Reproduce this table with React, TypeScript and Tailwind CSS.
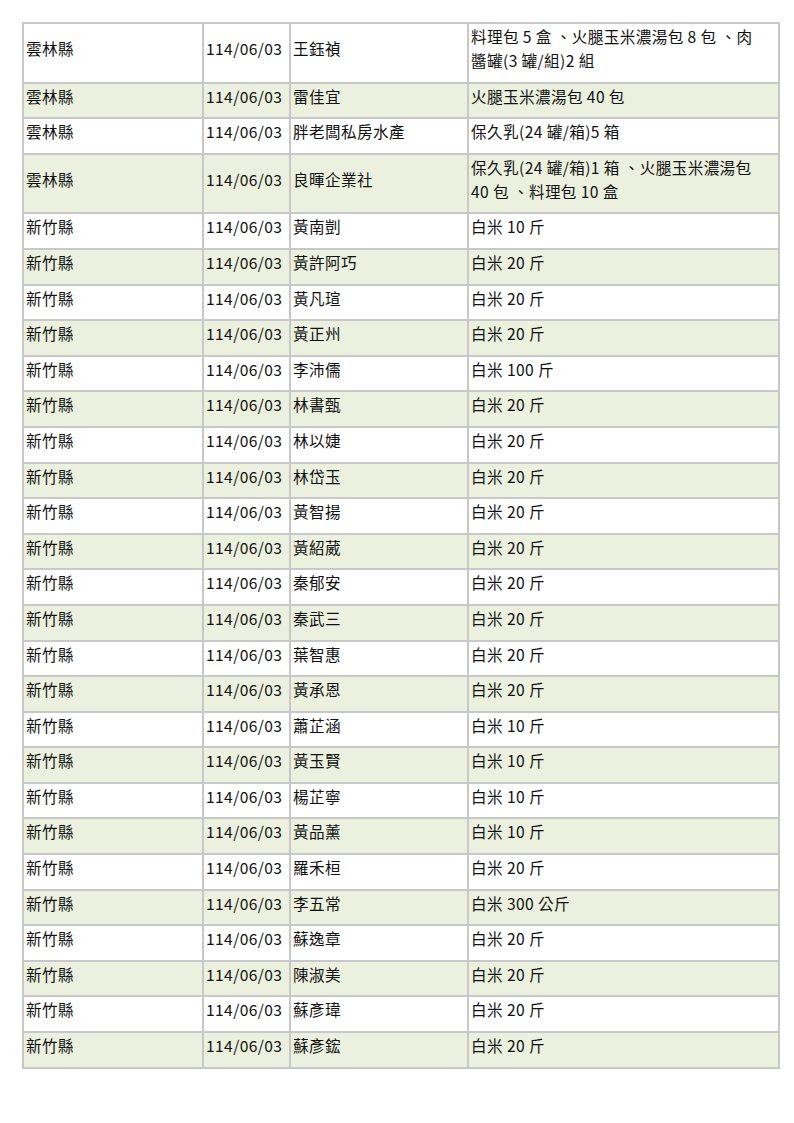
import { Fragment } from "react";

type Row = {
  county: string;
  date: string;
  name: string;
  items: string[];
};

const rice = (n: string, unit = "斤") => [`白米 ${n} ${unit}`];

const rows: Row[] = [
  {
    county: "雲林縣",
    date: "114/06/03",
    name: "王鈺禎",
    items: ["料理包 5 盒 、火腿玉米濃湯包 8 包 、肉", "醬罐(3 罐/組)2 組"],
  },
  { county: "雲林縣", date: "114/06/03", name: "雷佳宜", items: ["火腿玉米濃湯包 40 包"] },
  { county: "雲林縣", date: "114/06/03", name: "胖老闆私房水產", items: ["保久乳(24 罐/箱)5 箱"] },
  {
    county: "雲林縣",
    date: "114/06/03",
    name: "良暉企業社",
    items: ["保久乳(24 罐/箱)1 箱 、火腿玉米濃湯包", "40 包 、料理包 10 盒"],
  },
  { county: "新竹縣", date: "114/06/03", name: "黃南剴", items: rice("10") },
  { county: "新竹縣", date: "114/06/03", name: "黃許阿巧", items: rice("20") },
  { county: "新竹縣", date: "114/06/03", name: "黃凡瑄", items: rice("20") },
  { county: "新竹縣", date: "114/06/03", name: "黃正州", items: rice("20") },
  { county: "新竹縣", date: "114/06/03", name: "李沛儒", items: rice("100") },
  { county: "新竹縣", date: "114/06/03", name: "林書甄", items: rice("20") },
  { county: "新竹縣", date: "114/06/03", name: "林以婕", items: rice("20") },
  { county: "新竹縣", date: "114/06/03", name: "林岱玉", items: rice("20") },
  { county: "新竹縣", date: "114/06/03", name: "黃智揚", items: rice("20") },
  { county: "新竹縣", date: "114/06/03", name: "黃紹葳", items: rice("20") },
  { county: "新竹縣", date: "114/06/03", name: "秦郁安", items: rice("20") },
  { county: "新竹縣", date: "114/06/03", name: "秦武三", items: rice("20") },
  { county: "新竹縣", date: "114/06/03", name: "葉智惠", items: rice("20") },
  { county: "新竹縣", date: "114/06/03", name: "黃承恩", items: rice("20") },
  { county: "新竹縣", date: "114/06/03", name: "蕭芷涵", items: rice("10") },
  { county: "新竹縣", date: "114/06/03", name: "黃玉賢", items: rice("10") },
  { county: "新竹縣", date: "114/06/03", name: "楊芷寧", items: rice("10") },
  { county: "新竹縣", date: "114/06/03", name: "黃品薰", items: rice("10") },
  { county: "新竹縣", date: "114/06/03", name: "羅禾桓", items: rice("20") },
  { county: "新竹縣", date: "114/06/03", name: "李五常", items: rice("300", "公斤") },
  { county: "新竹縣", date: "114/06/03", name: "蘇逸章", items: rice("20") },
  { county: "新竹縣", date: "114/06/03", name: "陳淑美", items: rice("20") },
  { county: "新竹縣", date: "114/06/03", name: "蘇彥瑋", items: rice("20") },
  { county: "新竹縣", date: "114/06/03", name: "蘇彥鋐", items: rice("20") },
];

const cell =
  "border-r-2 border-b-2 border-[#c8c8c8] pl-[2px] pr-[2px] pt-0 pb-[9.6px] leading-[24px] whitespace-nowrap";

export default function App() {
  return (
    <div className="min-h-[1123px] w-[794px] bg-white pl-[22px] pt-[22px] font-['Noto_Sans_CJK_TC','Noto_Sans',sans-serif] text-[15.6px] tracking-[0.4px] text-[#111]">
      <table className="w-[758px] table-fixed border-separate border-spacing-0 border-t-2 border-l-2 border-[#c8c8c8]">
        <colgroup>
          <col className="w-[180px]" />
          <col className="w-[87px]" />
          <col className="w-[178px]" />
          <col className="w-[311px]" />
        </colgroup>
        <tbody>
          {rows.map((row, i) => (
            <tr key={i} className={i % 2 === 1 ? "bg-[#ebf1de]" : "bg-white"}>
              <td className={`${cell} align-middle`}>{row.county}</td>
              <td className={`${cell} align-middle`}>{row.date}</td>
              <td className={`${cell} align-middle`}>{row.name}</td>
              <td className={`${cell} align-top`}>
                {row.items.map((line, j) => (
                  <Fragment key={j}>
                    {j > 0 && <br />}
                    {line}
                  </Fragment>
                ))}
              </td>
            </tr>
          ))}
        </tbody>
      </table>
    </div>
  );
}
